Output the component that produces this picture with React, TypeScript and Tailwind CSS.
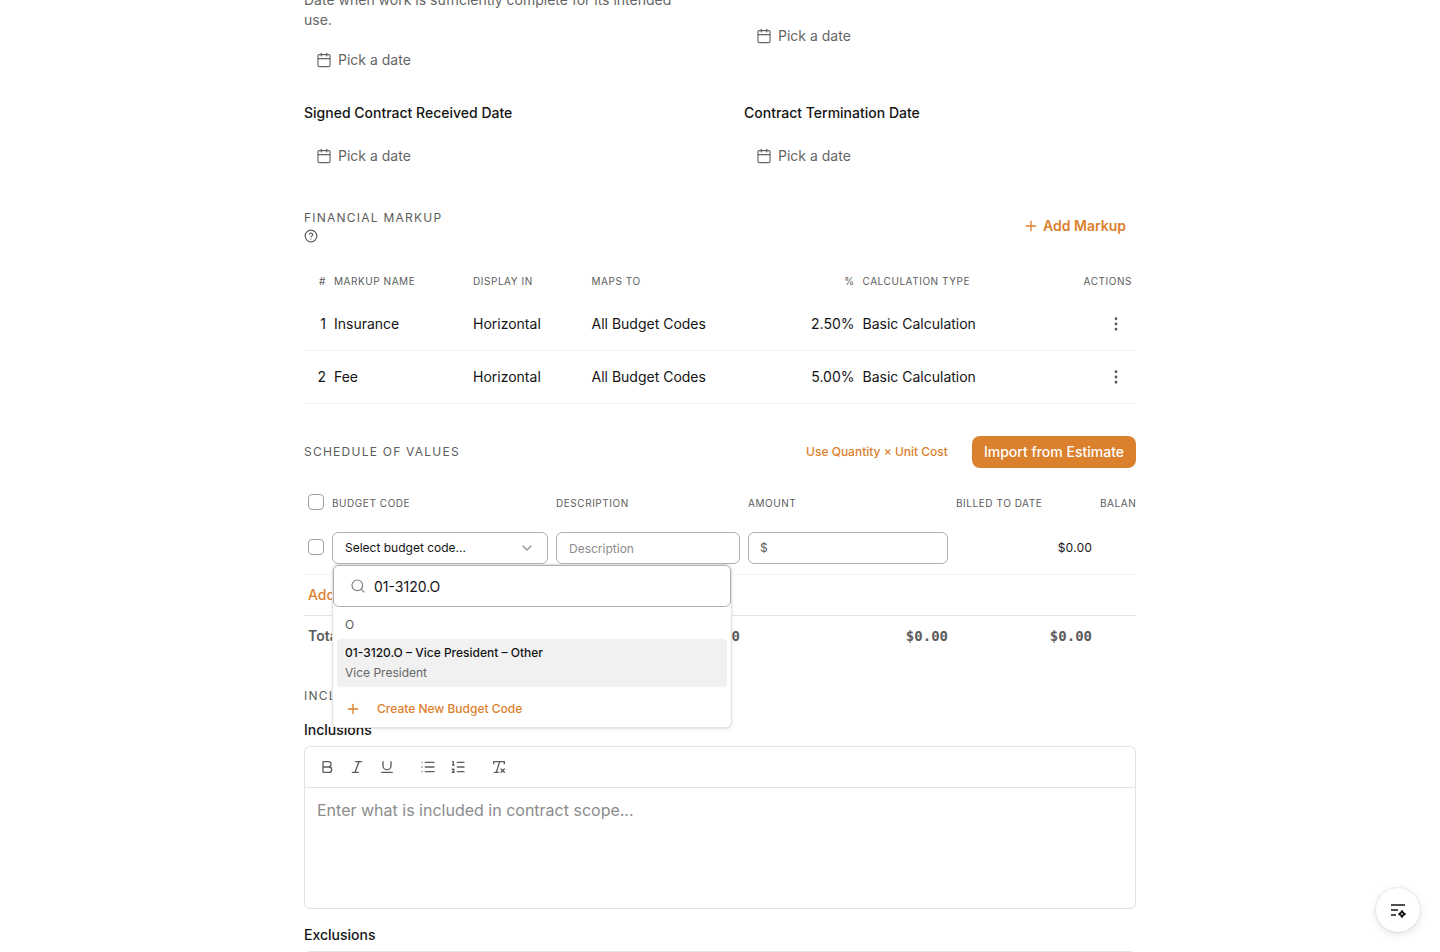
import {
  Bold,
  Calendar,
  ChevronDown,
  CircleQuestionMark,
  EllipsisVertical,
  Italic,
  List,
  ListOrdered,
  Plus,
  RemoveFormatting,
  Search,
  Underline,
} from 'lucide-react';
import React from 'react';

const markups = [
  { id: 1, name: 'Insurance', display: 'Horizontal', mapsTo: 'All Budget Codes', percent: '2.50%', type: 'Basic Calculation' },
  { id: 2, name: 'Fee', display: 'Horizontal', mapsTo: 'All Budget Codes', percent: '5.00%', type: 'Basic Calculation' },
];

function DateButton() {
  return (
    <button className="flex h-8 items-center gap-1.5 px-3 text-sm text-[#666]">
      <Calendar size={16} strokeWidth={1.75} />
      Pick a date
    </button>
  );
}

function DateField({ label }: { label: string }) {
  return (
    <div>
      <p className="text-sm font-medium leading-5">{label}</p>
      <div className="mt-[17px]">
        <DateButton />
      </div>
    </div>
  );
}

function SectionTitle({ children }: { children: React.ReactNode }) {
  return <h2 className="text-xs leading-4 tracking-[1.24px] uppercase text-[#5c5c5c]">{children}</h2>;
}

function FinancialMarkup() {
  const grid = 'grid grid-cols-[26px_139px_118.5px_162px_109px_1fr_90px] *:px-1';
  return (
    <section className="mt-[38px]">
      <div className="flex h-8 items-center justify-between">
        <div className="pt-px">
          <SectionTitle>Financial Markup</SectionTitle>
          <CircleQuestionMark size={14} strokeWidth={2} className="mt-[3px] text-[#5c5c5c]" />
        </div>
        <button className="flex items-center gap-1 px-2.5 text-sm font-semibold text-[#db802d]">
          <Plus size={16} strokeWidth={2} />
          Add Markup
        </button>
      </div>
      <div className="mt-[23px]">
        <div className={`${grid} mb-px h-8 items-center text-[10px] tracking-[0.55px] uppercase text-[#5c5c5c]`}>
          <span className="text-right">#</span>
          <span>Markup Name</span>
          <span>Display In</span>
          <span>Maps To</span>
          <span className="text-right">%</span>
          <span>Calculation Type</span>
          <span className="text-right">Actions</span>
        </div>
        {markups.map((m) => (
          <div key={m.id} className={`${grid} h-[53px] items-center border-b border-[#f0f0f0] text-sm`}>
            <span className="text-right">{m.id}</span>
            <span>{m.name}</span>
            <span>{m.display}</span>
            <span>{m.mapsTo}</span>
            <span className="text-right">{m.percent}</span>
            <span>{m.type}</span>
            <span className="flex justify-end pr-[11px]!">
              <EllipsisVertical size={18} strokeWidth={1.75} className="text-[#5c5c5c]" />
            </span>
          </div>
        ))}
      </div>
    </section>
  );
}

function Checkbox() {
  return <span className="block size-4 rounded border border-[#a0a0a0] bg-white" />;
}

function BudgetCodeMenu() {
  return (
    <div className="absolute left-0 top-8 z-10 h-[164px] w-[400px] rounded-md border border-[#e2e2e2] bg-white shadow-sm">
      <div className="flex h-[42px] items-center gap-2 rounded-md border border-[#b0b0b0] pl-4 text-sm">
        <Search size={16} strokeWidth={1.75} className="text-[#808080]" />
        <span className="pt-0.5">01-3120.O</span>
      </div>
      <div className="px-1 text-xs">
        <p className="mt-2 px-2 leading-5 text-[#5c5c5c]">O</p>
        <div className="mt-1 h-12 rounded-sm bg-[#f1f1f1] px-2 pt-1">
          <p className="font-medium leading-5">01-3120.O – Vice President – Other</p>
          <p className="leading-5 text-[#666]">Vice President</p>
        </div>
        <button className="mt-3 flex h-5 items-center px-2 font-medium text-[#db802d]">
          <Plus size={16} strokeWidth={2} className="mr-4" />
          Create New Budget Code
        </button>
      </div>
    </div>
  );
}

function ScheduleOfValues() {
  const grid = 'grid grid-cols-[24px_224px_192px_208px_144px_144px] *:px-1';
  return (
    <section className="mt-8">
      <div className="flex h-8 items-center justify-between">
        <SectionTitle>Schedule of Values</SectionTitle>
        <div className="flex items-center gap-6">
          <button className="text-xs font-medium text-[#db802d]">Use Quantity × Unit Cost</button>
          <button className="h-8 rounded-lg bg-[#db802d] px-3 text-sm font-medium text-white">Import from Estimate</button>
        </div>
      </div>
      <div className="relative mt-4">
        <div className="overflow-hidden">
          <div className={`${grid} h-[38px] w-[936px] items-center text-[10px] tracking-[0.55px] uppercase text-[#5c5c5c]`}>
            <span className="-mt-0.5"><Checkbox /></span>
            <span>Budget Code</span>
            <span>Description</span>
            <span>Amount</span>
            <span>Billed to Date</span>
            <span>Balance</span>
          </div>
          <div className={`${grid} h-[53px] w-[936px] items-center border-b border-[#f0f0f0] text-xs`}>
            <span className="-mt-0.5"><Checkbox /></span>
            <div>
              <button className="flex h-8 w-full items-center justify-between rounded-md border border-[#b0b0b0] px-3">
                Select budget code...
                <ChevronDown size={16} strokeWidth={2} className="text-[#909090]" />
              </button>
            </div>
            <div>
              <div className="flex h-8 items-center rounded-md border border-[#b0b0b0] px-3 pt-px text-[#8c8c8c]">Description</div>
            </div>
            <div>
              <div className="flex h-8 items-center rounded-md border border-[#b0b0b0] px-[11px] text-[#5c5c5c]">$</div>
            </div>
            <span className="text-right tabular-nums">$0.00</span>
          </div>
          <div className="flex h-[41px] items-center border-b border-[#e2e2e2] px-1 text-sm font-medium text-[#db802d]">Add Line</div>
          <div className={`${grid} h-10 w-[936px] items-center text-sm font-medium text-[#5c5c5c]`}>
            <span className="col-span-2 font-semibold">Total:</span>
            <span className="text-right font-['DejaVu_Sans_Mono'] font-bold">$0.00</span>
            <span className="text-right font-['DejaVu_Sans_Mono'] font-bold">$0.00</span>
            <span className="text-right font-['DejaVu_Sans_Mono'] font-bold">$0.00</span>
          </div>
        </div>
        <div className="absolute left-7 top-12 h-8 w-[216px]">
          <BudgetCodeMenu />
        </div>
      </div>
    </section>
  );
}

function RichTextEditor({ placeholder }: { placeholder?: string }) {
  return (
    <div className="h-[163px] rounded-md border border-[#e2e2e2]">
      <div className="flex h-[41px] items-center border-b border-[#e2e2e2] pl-3.5 text-[#5c5c5c]">
        <Bold size={16} strokeWidth={2} className="mr-3.5" />
        <Italic size={16} strokeWidth={2} className="mr-3.5" />
        <Underline size={16} strokeWidth={2} className="mr-[25px]" />
        <List size={16} strokeWidth={2} className="mr-3.5" />
        <ListOrdered size={16} strokeWidth={2} className="mr-[25px]" />
        <RemoveFormatting size={16} strokeWidth={2} />
      </div>
      <p className="px-3 pt-2.5 leading-6 text-[#8c8c8c]">{placeholder}</p>
    </div>
  );
}

export default function App() {
  return (
    <div className="relative h-[952px] overflow-hidden bg-white font-[Inter,sans-serif] text-[#141414]">
      <main className="mx-auto -mt-2.5 w-[832px]">
        <div className="grid grid-cols-2 gap-x-12">
          <div className="h-[113px]">
            <p className="text-sm leading-5 text-[#666]">Date when work is sufficiently complete for its intended use.</p>
            <div className="mt-3.5">
              <DateButton />
            </div>
          </div>
          <div className="pt-[30px]">
            <DateButton />
          </div>
          <DateField label="Signed Contract Received Date" />
          <DateField label="Contract Termination Date" />
        </div>

        <FinancialMarkup />
        <ScheduleOfValues />

        <section className="mt-8">
          <SectionTitle>Inclusions &amp; Exclusions</SectionTitle>
          <p className="mt-4 text-sm font-medium leading-5">Inclusions</p>
          <div className="mt-1.5">
            <RichTextEditor placeholder="Enter what is included in contract scope..." />
          </div>
          <p className="mt-4 text-sm font-medium leading-5">Exclusions</p>
          <div className="mt-1.5">
            <RichTextEditor />
          </div>
        </section>
      </main>

      <button className="absolute right-5 bottom-5 flex size-11 items-center justify-center rounded-full bg-white shadow-[0_0_0_1px_rgba(0,0,0,0.05),0_2px_8px_rgba(0,0,0,0.12)]">
        <svg width="18" height="18" viewBox="0 0 18 18" fill="none" stroke="currentColor" strokeWidth="1.5">
          <path d="M2 4h14M2 9h7M2 14h5" />
          <path d="M13 10l1.1 1.9 1.9 1.1-1.900 1.100-1.100 1.900-1.100-1.900-1.900-1.100 1.900-1.100z" strokeWidth="1.800" strokeLinejoin="round" />
        </svg>
      </button>
    </div>
  );
}
